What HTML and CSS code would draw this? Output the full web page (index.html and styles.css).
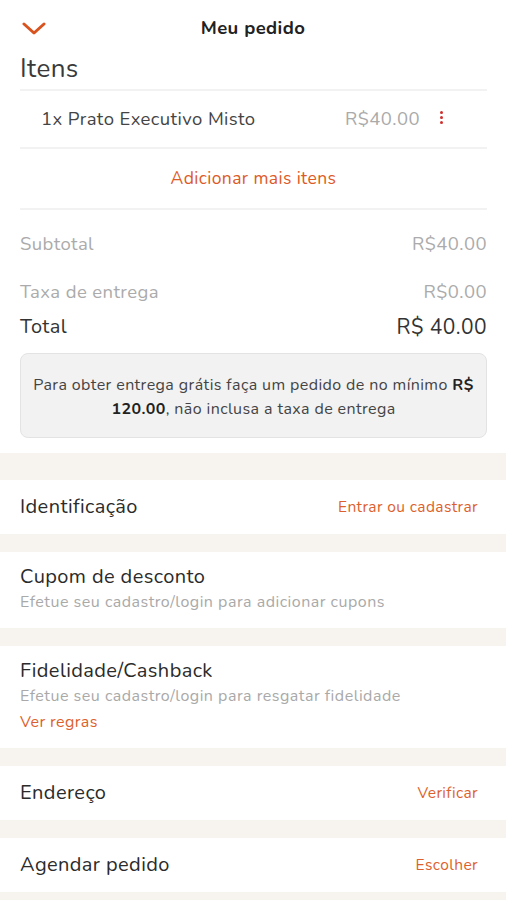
FILE: index.html
```html
<!DOCTYPE html>
<html lang="pt-BR">
<head>
    <meta charset="UTF-8">
    <meta name="viewport" content="width=device-width, initial-scale=1.0">
    <title>Meu pedido</title>
    <link rel="stylesheet" href="styles.css">
</head>
<body>
    <div class="topbar">
        <svg class="back" width="24" height="13" viewBox="0 0 24 13">
            <path d="M2 2 L12 11 L22 2" fill="none" stroke="#d9531e" stroke-width="3" stroke-linecap="round" stroke-linejoin="round"/>
        </svg>
        <div class="title">Meu pedido</div>
    </div>

    <div class="order">
        <div class="section-title">Itens</div>
        <div class="item">
            <span class="item-name">1x Prato Executivo Misto</span>
            <span class="item-price">R$40.00</span>
            <span class="dots"><i></i><i></i><i></i></span>
        </div>
        <div class="add-more">Adicionar mais itens</div>

        <div class="line muted first"><span>Subtotal</span><span>R$40.00</span></div>
        <div class="line muted"><span>Taxa de entrega</span><span>R$0.00</span></div>
        <div class="line total"><span>Total</span><span>R$ 40.00</span></div>

        <div class="notice">
            Para obter entrega grátis faça um pedido de no mínimo <b>R$<br>120.00</b>, não inclusa a taxa de entrega
        </div>
    </div>

    <div class="sections">
        <div class="row">
            <span class="row-title">Identificação</span>
            <span class="link">Entrar ou cadastrar</span>
        </div>
        <div class="row stacked">
            <div class="row-title">Cupom de desconto</div>
            <div class="row-sub">Efetue seu cadastro/login para adicionar cupons</div>
        </div>
        <div class="row stacked">
            <div class="row-title">Fidelidade/Cashback</div>
            <div class="row-sub">Efetue seu cadastro/login para resgatar fidelidade</div>
            <div class="link rules">Ver regras</div>
        </div>
        <div class="row">
            <span class="row-title">Endereço</span>
            <span class="link">Verificar</span>
        </div>
        <div class="row">
            <span class="row-title">Agendar pedido</span>
            <span class="link">Escolher</span>
        </div>
    </div>
</body>
</html>
```

FILE: styles.css
```css
body {
    margin: 0;
    font-family: "Nunito", Lato, "Open Sans", sans-serif;
    letter-spacing: 0.4px;
    background-color: #f7f3ef;
    color: #333;
}
.topbar {
    position: relative;
    height: 56px;
    background-color: #fff;
    display: flex;
    align-items: center;
    justify-content: center;
}
.topbar .back {
    position: absolute;
    left: 22px;
    top: 22px;
}
.title {
    font-size: 18.5px;
    font-weight: bold;
    color: #222;
}
.order {
    background-color: #fff;
    padding: 0 19px 15px 20px;
    margin-top: -2px;
}
.section-title {
    font-size: 26px;
    color: #3a3a3a;
    line-height: 30px;
    padding-bottom: 5px;
    border-bottom: 2px solid #f2f2f2;
}
.item {
    display: flex;
    align-items: center;
    height: 56px;
    padding-left: 21px;
    font-size: 18.5px;
    border-bottom: 2px solid #f2f2f2;
}
.item-name {
    flex: 1;
    color: #444;
}
.item-price {
    color: #aaa;
}
.dots {
    display: flex;
    flex-direction: column;
    gap: 2px;
    margin: 0 44px 4px 20px;
}
.dots i {
    width: 3px;
    height: 3px;
    border-radius: 50%;
    background-color: #d0312d;
}
.add-more {
    text-align: center;
    font-size: 17.5px;
    color: #dd5a26;
    line-height: 59px;
    border-bottom: 2px solid #f2f2f2;
}
.line {
    display: flex;
    justify-content: space-between;
}
.line.muted {
    font-size: 18.5px;
    color: #ababab;
    line-height: 24px;
    margin-top: 24px;
}
.line.muted.first {
    margin-top: 22px;
}
.line.total {
    font-size: 20px;
    color: #333;
    line-height: 26px;
    margin-top: 10px;
}
.line.total span:last-child {
    font-size: 21px;
}
.notice {
    margin-top: 13px;
    background-color: #f2f2f2;
    border: 1px solid #e3e3e3;
    border-radius: 8px;
    padding: 19px 8px 16px;
    text-align: center;
    font-size: 16px;
    line-height: 24px;
    color: #444;
}
.notice b {
    color: #222;
}
.sections {
    display: flex;
    flex-direction: column;
    gap: 18px;
    padding-top: 27px;
}
.row {
    background-color: #fff;
    display: flex;
    justify-content: space-between;
    align-items: center;
    height: 54px;
    padding: 0 28px 0 20px;
}
.row.stacked {
    display: block;
    height: auto;
    padding-top: 13px;
    padding-bottom: 13px;
}
.row-title {
    font-size: 20px;
    color: #2b2b2b;
    line-height: 24px;
}
.row-sub {
    font-size: 16px;
    letter-spacing: 0.5px;
    color: #a9a9a9;
    line-height: 26px;
}
.link {
    font-size: 15.5px;
    color: #dd5f2e;
    line-height: 26px;
}
.link.rules {
    font-size: 16px;
}
```
